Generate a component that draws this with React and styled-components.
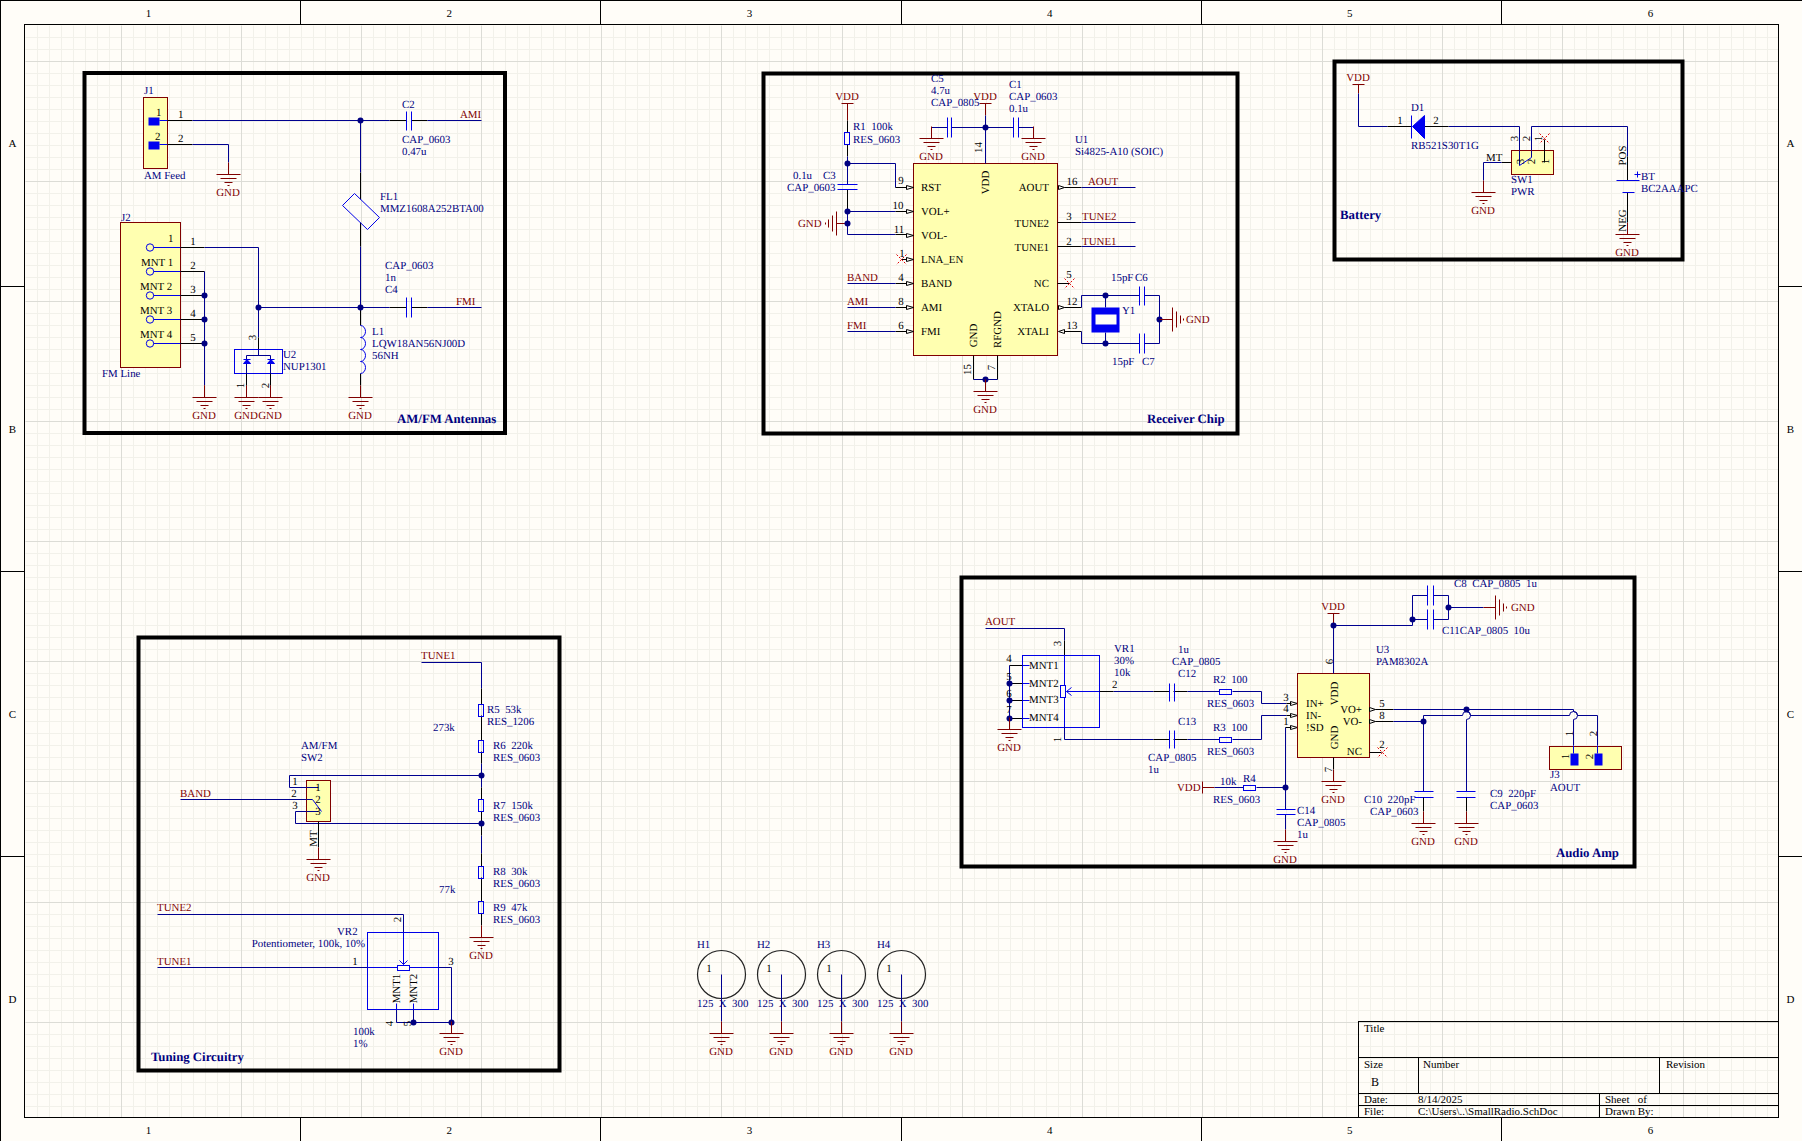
import React from "react";
import styled, { createGlobalStyle } from "styled-components";

const SHEET_BG = "#fffdf8";

const GlobalStyle = createGlobalStyle`
  * { box-sizing: border-box; }
  html, body { margin: 0; padding: 0; background: ${SHEET_BG}; }
`;

const Frame = styled.div`
  width: 1802px;
  height: 1141px;
  overflow: hidden;
  display: grid;
  grid-template-columns: 24px 1755px 23px;
  grid-template-rows: 24px 1094px 23px;
  background: ${SHEET_BG};
  font-family: "Liberation Serif", "Times New Roman", serif;
  color: #000;
`;

const HRuler = styled.div`
  grid-column: 1 / -1;
  grid-row: ${(p) => (p.$bottom ? 3 : 1)};
  display: grid;
  grid-template-columns: repeat(5, 300.2px) 1fr;
  border-top: ${(p) => (p.$bottom ? "none" : "1px solid #000")};
`;

const HZone = styled.div`
  display: flex;
  align-items: center;
  justify-content: center;
  padding-right: 3px;
  font-size: 11px;
  &:not(:first-child) { border-left: 1px solid #000; }
`;

const VRuler = styled.div`
  grid-column: ${(p) => (p.$right ? 3 : 1)};
  grid-row: 1 / -1;
  display: grid;
  grid-template-rows: 286px 285px 285px 1fr;
  border-left: ${(p) => (p.$right ? "none" : "1px solid #000")};
`;

const VZone = styled.div`
  display: flex;
  align-items: center;
  justify-content: center;
  font-size: 11px;
  &:not(:first-child) { border-top: 1px solid #000; }
`;

const Sheet = styled.div`
  grid-column: 2;
  grid-row: 2;
  position: relative;
  border: 1px solid #000;
  background: ${SHEET_BG};
`;

const Canvas = styled.svg`
  display: block;
  width: 1753px;
  height: 1092px;
`;

const TitleBlock = styled.div`
  position: absolute;
  right: 0;
  bottom: 0;
  width: 420px;
  display: flex;
  flex-direction: column;
  border-left: 1px solid #000;
  font-size: 11px;
  line-height: 12px;
`;

const TitleRow = styled.div`
  height: 36px;
  padding-left: 5px;
  border-top: 1px solid #000;
`;

const SizeRow = styled.div`
  height: 36px;
  display: grid;
  grid-template-columns: 59px 241px 1fr;
  border-top: 1px solid #000;
`;

const SizeCell = styled.div`
  padding-left: ${(p) => p.$inset}px;
  &:not(:first-child) { border-left: 1px solid #000; }
`;

const SizeLetter = styled.div`
  margin: 6px 0 0 7px;
  font-size: 12px;
`;

const StampRow = styled.div`
  height: 12px;
  display: grid;
  grid-template-columns: 59px 181px 1fr;
  border-top: 1px solid #000;
  line-height: 10px;
  overflow: hidden;
`;

const StampCell = styled.div`
  padding-left: ${(p) => (p.$value ? "0" : "5px")};
  white-space: pre;
  &:nth-child(3) { border-left: 1px solid #000; }
`;

// schematic primitives
const GridLine = styled.path`
  stroke: ${(p) => (p.$major ? "#dcdcd6" : "#f2f1ea")};
  fill: none;
`;
const Block = styled.rect`
  fill: none;
  stroke: #000;
  stroke-width: 4;
`;
const Wire = styled.path`
  fill: none;
  stroke: #000090;
`;
const Lead = styled.path`
  fill: none;
  stroke: #000;
`;
const Part = styled.path`
  fill: none;
  stroke: #0000e8;
`;
const Stub = styled.path`
  fill: none;
  stroke: #800000;
`;
const Body = styled.rect`
  fill: #ffffb0;
  stroke: #800000;
`;
const Outline = styled.rect`
  fill: none;
  stroke: #0000e8;
`;
const Pad = styled.rect`
  fill: #0000f0;
`;
const Dot = styled.circle`
  fill: #000080;
  r: 3px;
`;
const Hole = styled.circle`
  fill: none;
  stroke: #222;
  stroke-width: 1.2;
`;
const Arrow = styled.path`
  fill: none;
  stroke: #000;
`;
const Solid = styled.path`
  fill: #0000f0;
  stroke: #0000f0;
`;
const NoErcMark = styled.path`
  fill: none;
  stroke: #e00000;
  stroke-dasharray: 2 1.5;
`;

const SchText = styled.text.attrs((p) => ({
  dx: p.dx ?? -0.5,
  dy: p.dy ?? -1.2,
}))`
  font-family: "Liberation Serif", "Times New Roman", serif;
  font-size: 10.9px;
  white-space: pre;
  text-rendering: geometricPrecision;
`;
const Ref = styled(SchText)`
  fill: #000080;
`;
const Num = styled(SchText)`
  fill: #000;
`;
const Net = styled(SchText)`
  fill: #800000;
`;
const Caption = styled(SchText)`
  fill: #000080;
  font-weight: bold;
  font-size: 12.8px;
`;

// rotated text, x/y is the centre
const Up = ({ as: Tag = Num, x, y, children }) => (
  <Tag x={x} y={y} dx={0} dy="0.33em" textAnchor="middle" transform={`rotate(-90 ${x} ${y})`}>
    {children}
  </Tag>
);

const Gnd = ({ x, y }) => (
  <>
    <Stub d={`M${x} ${y - 12}V${y}M${x - 12} ${y}H${x + 12}M${x - 8} ${y + 4}H${x + 8}M${x - 4} ${y + 8}H${x + 4}M${x - 1} ${y + 11}H${x + 1}`} />
    <Net x={x} y={y + 23} textAnchor="middle">GND</Net>
  </>
);

// power port lying on its side, bars to the right (dir 1) or left (dir -1)
const GndSide = ({ x, y, dir = 1 }) => (
  <Stub
    d={`M${x} ${y - 12}V${y + 12}M${x + dir * 4} ${y - 8}V${y + 8}M${x + dir * 8} ${y - 4}V${y + 4}M${x + dir * 11} ${y - 1}V${y + 1}`}
  />
);

const Vdd = ({ x, y, len = 12 }) => (
  <>
    <Stub d={`M${x - 6} ${y}H${x + 6}M${x} ${y}V${y + len}`} />
    <Net x={x} y={y - 2} textAnchor="middle">VDD</Net>
  </>
);

const InPin = ({ x, y }) => <Arrow d={`M${x - 7} ${y - 2}V${y + 2}L${x} ${y}Z`} />;
const OutPin = ({ x, y }) => <Arrow d={`M${x} ${y - 2}V${y + 2}L${x + 6} ${y}Z`} />;
const NoErc = ({ x, y }) => <NoErcMark d={`M${x - 5} ${y - 5}L${x + 5} ${y + 5}M${x + 5} ${y - 5}L${x - 5} ${y + 5}`} />;

const gridX = Array.from({ length: 145 }, (_, i) => i + 3);
const gridY = Array.from({ length: 90 }, (_, i) => i + 3);
const snap = (k) => Math.round(0.5 + 12.015 * k);

const SheetGrid = () => (
  <>
    {[false, true].map((major) => (
      <GridLine
        key={String(major)}
        $major={major}
        d={
          gridX.filter((k) => (k % 10 === 0) === major).map((k) => `M${snap(k)} 25V1117`).join("") +
          gridY.filter((k) => (k % 10 === 5) === major).map((k) => `M25 ${snap(k)}H1778`).join("")
        }
      />
    ))}
  </>
);

const Antennas = () => (
  <>
    <Block x={84} y={72.500} width={420.500} height={360} />
    <Body x={143} y={97} width={24} height={71} />
    <Pad x={148} y={117} width={11} height={8} />
    <Pad x={148} y={141} width={11} height={8} />
    <Part d="M159 120H167M159 144H167" />
    <Lead d="M167 120H192M167 144H192M389 120H406M411 120H427M389 307H406M411 307H427" />
    <Wire d="M192 120H389M427 120H481M192 144H228V162M258 307H389M427 307H481" />
    <Part d="M406 111V130M411 111V130M406 297V317M411 297V317" />
    <Dot cx={360} cy={120} />
    <Gnd x={228} y={174} />
    <Ref x={144} y={95}>J1</Ref>
    <Num x={156} y={117}>1</Num>
    <Num x={155} y={141}>2</Num>
    <Num x={178} y={119}>1</Num>
    <Num x={178} y={143}>2</Num>
    <Ref x={402} y={109}>C2</Ref>
    <Net x={460} y={119}>AMI</Net>
    <Ref x={402} y={144}>CAP_0603</Ref>
    <Ref x={402} y={156}>0.47u</Ref>
    <Ref x={144} y={180}>AM Feed</Ref>

    <Wire d="M360 120V172M360 246V307" />
    <Lead d="M360 172V199M360 222V246M360 307V325M360 373V385" />
    <Part d="M354 193L379 217L367 229L342 205Z" />
    <Part d="M360 325a5 6 0 0 1 0 12a5 6 0 0 1 0 12a5 6 0 0 1 0 12a5 6 0 0 1 0 12" />
    <Gnd x={360} y={397} />
    <Dot cx={360} cy={307} />
    <Dot cx={258} cy={307} />
    <Ref x={380} y={201}>FL1</Ref>
    <Ref x={380} y={213}>MMZ1608A252BTA00</Ref>
    <Ref x={385} y={270}>CAP_0603</Ref>
    <Ref x={385} y={282}>1n</Ref>
    <Ref x={385} y={294}>C4</Ref>
    <Net x={456} y={306}>FMI</Net>
    <Ref x={372} y={336}>L1</Ref>
    <Ref x={372} y={348}>LQW18AN56NJ00D</Ref>
    <Ref x={372} y={360}>56NH</Ref>

    <Body x={120} y={222} width={60} height={145} />
    {[247, 271, 295, 319, 343].map((y) => (
      <React.Fragment key={y}>
        <Part d={`M153 ${y}H180`} />
        <Outline as="circle" cx={149.500} cy={y} r={3.700} />
        <Lead d={`M180 ${y}H204`} />
      </React.Fragment>
    ))}
    <Wire d="M204 247H258V337M204 271V385" />
    <Lead d="M258 337V349" />
    <Stub d="M204 385V397M246 385V397M270 385V397" />
    <Dot cx={204} cy={295} />
    <Dot cx={204} cy={319} />
    <Dot cx={204} cy={343} />
    <Gnd x={204} y={397} />
    <Ref x={121} y={222}>J2</Ref>
    <Num x={168} y={243}>1</Num>
    <Num x={141} y={267}>MNT 1</Num>
    <Num x={140} y={291}>MNT 2</Num>
    <Num x={140} y={315}>MNT 3</Num>
    <Num x={140} y={339}>MNT 4</Num>
    {[["1", 246], ["2", 270], ["3", 294], ["4", 318], ["5", 342]].map(([n, y]) => (
      <Num key={n} x={193} y={y} textAnchor="middle">{n}</Num>
    ))}
    <Ref x={102} y={378}>FM Line</Ref>

    <Outline x={234} y={349} width={48} height={24} />
    <Wire d="M258 349V355M246 355H270M246 355V373M270 355V373" />
    <Lead d="M246 373V385M270 373V385" />
    <Solid d="M243 363H250L246.500 359ZM267 363H274L270.500 359Z" />
    <Part d="M243 359H250M267 359H274" />
    <Gnd x={246} y={397} />
    <Gnd x={270} y={397} />
    <Up x={252} y={337}>3</Up>
    <Up x={240} y={385}>1</Up>
    <Up x={265} y={385}>2</Up>
    <Ref x={283} y={359}>U2</Ref>
    <Ref x={283} y={371}>NUP1301</Ref>
    <Caption x={397} y={424}>AM/FM Antennas</Caption>
  </>
);

const ReceiverChip = () => (
  <>
    <Block x={763} y={73} width={474} height={360} />
    <Body x={913} y={163} width={144} height={192} />

    <Vdd x={847} y={103} len={17} />
    <Lead d="M847 120V132M847 144V156M847 189V211" />
    <Wire d="M847 156V184M847 211V234H895M847 163H895V187M847 211H895" />
    <Lead d="M895 187H906M895 211H906M895 234H906M895 283H906M895 307H906M895 331H906" />
    <Outline x={844} y={132} width={5} height={12} />
    <Part d="M837 184H857M837 189H857" />
    <Stub d="M836 223H847" />
    <GndSide x={836} y={223} dir={-1} />
    <Dot cx={847} cy={163} />
    <Dot cx={847} cy={211} />
    <Dot cx={847} cy={223} />
    <Net x={798} y={228}>GND</Net>
    <Ref x={853} y={131}>R1  100k</Ref>
    <Ref x={853} y={144}>RES_0603</Ref>
    <Ref x={793} y={180}>0.1u</Ref>
    <Ref x={823} y={180}>C3</Ref>
    <Ref x={787} y={192}>CAP_0603</Ref>

    <Vdd x={985} y={103} />
    <Wire d="M985 115V163M931 127H947M951 127H1013M1018 127H1033V138M931 127V138" />
    <Part d="M947 117V137M951 117V137M1013 117V137M1018 117V137" />
    <Dot cx={985} cy={127} />
    <Gnd x={931} y={138} />
    <Gnd x={1033} y={138} />
    <Ref x={931} y={83}>C5</Ref>
    <Ref x={931} y={95}>4.7u</Ref>
    <Ref x={931} y={107}>CAP_0805</Ref>
    <Ref x={1009} y={89}>C1</Ref>
    <Ref x={1009} y={101}>CAP_0603</Ref>
    <Ref x={1009} y={113}>0.1u</Ref>
    <Ref x={1075} y={144}>U1</Ref>
    <Ref x={1075} y={156}>Si4825-A10 (SOIC)</Ref>
    <Up x={978} y={147}>14</Up>
    <Up x={985} y={182}>VDD</Up>

    {[187, 211, 235, 259, 283, 307, 331].map((y) => <InPin key={y} x={913} y={y} />)}
    <Lead d="M901 259H906" />
    <NoErc x={901} y={259} />
    <Wire d="M847 283H895M847 307H895M847 331H895" />
    {[["RST", 192], ["VOL+", 216], ["VOL-", 240], ["LNA_EN", 264], ["BAND", 288], ["AMI", 312], ["FMI", 336]].map(([t, y]) => (
      <Num key={t} x={921} y={y}>{t}</Num>
    ))}
    {[["AOUT", 192], ["TUNE2", 228], ["TUNE1", 252], ["NC", 288], ["XTALO", 312], ["XTALI", 336]].map(([t, y]) => (
      <Num key={t} x={1049} y={y} textAnchor="end">{t}</Num>
    ))}
    {[["9", 901, 185], ["10", 898, 210], ["11", 899, 234], ["1", 902, 258], ["4", 901, 282], ["8", 901, 306], ["6", 901, 330]].map(([n, x, y]) => (
      <Num key={n} x={x} y={y} textAnchor="middle">{n}</Num>
    ))}
    <Net x={847} y={282}>BAND</Net>
    <Net x={847} y={306}>AMI</Net>
    <Net x={847} y={330}>FMI</Net>

    <OutPin x={1058} y={187} />
    <OutPin x={1058} y={307} />
    <Arrow d="M1058 331L1064 329V333Z" />
    <Lead d="M1064 187H1081M1057 222H1081M1057 246H1081M1057 283H1069M1064 307H1081M1064 331H1081" />
    <Wire d="M1081 187H1135M1081 222H1135M1081 246H1135" />
    <NoErc x={1069} y={283} />
    <Wire d="M1081 307V295H1139M1144 295H1159V343H1144M1139 343H1081V331" />
    <Part d="M1139 286V305M1144 286V305M1139 333V353M1144 333V353" />
    <Dot cx={1105} cy={295} />
    <Dot cx={1105} cy={343} />
    <Dot cx={1159} cy={319} />
    <Wire d="M1105 295V307M1105 332V343" />
    <Pad x={1091} y={307} width={28} height={25} />
    <rect x={1095} y={314} width={21} height={10} fill={SHEET_BG} />
    <Stub d="M1159 319H1172" />
    <GndSide x={1172} y={319} />
    <Net x={1186} y={324}>GND</Net>
    <Ref x={1122} y={315}>Y1</Ref>
    <Ref x={1111} y={282}>15pF</Ref>
    <Ref x={1135} y={282}>C6</Ref>
    <Ref x={1112} y={366}>15pF</Ref>
    <Ref x={1142} y={366}>C7</Ref>
    <Num x={1072} y={186} textAnchor="middle">16</Num>
    <Net x={1088} y={186}>AOUT</Net>
    <Num x={1069} y={221} textAnchor="middle">3</Num>
    <Net x={1082} y={221}>TUNE2</Net>
    <Num x={1069} y={246} textAnchor="middle">2</Num>
    <Net x={1082} y={246}>TUNE1</Net>
    <Num x={1069} y={279} textAnchor="middle">5</Num>
    <Num x={1072} y={306} textAnchor="middle">12</Num>
    <Num x={1072} y={330} textAnchor="middle">13</Num>

    <Up x={973} y={335}>GND</Up>
    <Up x={997} y={329}>RFGND</Up>
    <Lead d="M973 355V379M997 355V379" />
    <Wire d="M973 379H997M985 379V391" />
    <Dot cx={985} cy={379} />
    <Gnd x={985} y={391} />
    <Up x={967} y={369}>15</Up>
    <Up x={991} y={367}>7</Up>
    <Caption x={1147} y={424}>Receiver Chip</Caption>
  </>
);

const Battery = () => (
  <>
    <Block x={1334} y={61} width={348} height={198} />
    <Vdd x={1358} y={84} len={9} />
    <Wire d="M1358 93V126H1387M1448 126H1519V150M1531 150V126H1627V156" />
    <Lead d="M1387 126H1411M1424 126H1448" />
    <Part d="M1411 115V138" />
    <Solid d="M1412 126L1424 115V138Z" />
    <Ref x={1411} y={112}>D1</Ref>
    <Num x={1400} y={125} textAnchor="middle">1</Num>
    <Num x={1436} y={125} textAnchor="middle">2</Num>
    <Ref x={1411} y={150}>RB521S30T1G</Ref>

    <Body x={1511} y={150} width={42} height={24} />
    <Wire d="M1519 150V165M1531 150V157" />
    <Part d="M1519 165L1531 157" />
    <Lead d="M1544 139V162M1501 162H1511" />
    <NoErc x={1544} y={138} />
    <Up x={1520} y={161}>3</Up>
    <Up x={1531} y={161}>2</Up>
    <Up x={1545} y={161}>1</Up>
    <Up x={1514} y={138}>3</Up>
    <Up x={1526} y={138}>2</Up>
    <Up x={1538} y={138}>1</Up>
    <Num x={1486} y={162}>MT</Num>
    <Wire d="M1501 162H1483V180" />
    <Gnd x={1483} y={192} />
    <Ref x={1511} y={184}>SW1</Ref>
    <Ref x={1511} y={196}>PWR</Ref>

    <Lead d="M1627 156V180M1627 192V222" />
    <Part d="M1616 180H1639M1622 192H1634M1634 174H1640M1637 171V177" />
    <Gnd x={1627} y={234} />
    <Up x={1622} y={155}>POS</Up>
    <Up x={1622} y={220}>NEG</Up>
    <Ref x={1641} y={181}>BT</Ref>
    <Ref x={1641} y={193}>BC2AAAPC</Ref>
    <Caption x={1340} y={220}>Battery</Caption>
  </>
);

const Tuning = () => (
  <>
    <Block x={138} y={637} width={421} height={433} />
    <Net x={421} y={660}>TUNE1</Net>
    <Wire d="M421 662H481V688M481 727V740M481 763V787M481 835V853M481 775H289V787H318" />
    <Lead d="M481 688V704M481 715V740M481 751V763M481 787V799M481 811V835M481 853V866M481 877V901M481 913V925" />
    <Wire d="M180 799H306M481 823H295V811H318" />
    {[704, 740, 799, 866, 901].map((y) => <Outline key={y} x={478} y={y} width={5} height={12} />)}
    <Dot cx={481} cy={775} />
    <Dot cx={481} cy={823} />
    <Gnd x={481} y={937} />
    {[
      ["R5  53k", 487, 714], ["RES_1206", 487, 726], ["R6  220k", 493, 750], ["RES_0603", 493, 762],
      ["R7  150k", 493, 810], ["RES_0603", 493, 822], ["R8  30k", 493, 876], ["RES_0603", 493, 888],
      ["R9  47k", 493, 912], ["RES_0603", 493, 924], ["273k", 433, 732], ["77k", 439, 894],
      ["AM/FM", 301, 750], ["SW2", 301, 762],
    ].map(([t, x, y]) => <Ref key={`${t}${y}`} x={x} y={y}>{t}</Ref>)}
    <Net x={180} y={798}>BAND</Net>

    <Body x={306} y={780} width={24} height={41} />
    <Wire d="M306 787H318M306 799H312M306 811H318" />
    <Part d="M312 799L321 811" />
    <Lead d="M318 821V847" />
    <Gnd x={318} y={859} />
    <Up x={313} y={838}>MT</Up>
    {[["1", 295, 786], ["2", 294, 798], ["3", 295, 810], ["1 ", 318, 792], ["2 ", 318, 804], ["3 ", 318, 816]].map(([n, x, y]) => (
      <Num key={n} x={x} y={y} textAnchor="middle">{n.trim()}</Num>
    ))}

    <Net x={157} y={912}>TUNE2</Net>
    <Wire d="M157 914H403V932" />
    <Part d="M403 932V964M399 960L403 964L407 960" />
    <Up x={397} y={919}>2</Up>
    <Outline x={367} y={932} width={71} height={77} />
    <Ref x={337} y={936}>VR2</Ref>
    <Ref x={365} y={948} textAnchor="end">Potentiometer, 100k, 10%</Ref>
    <Net x={157} y={966}>TUNE1</Net>
    <Wire d="M157 967H367" />
    <Part d="M367 967H397M409 967H438" />
    <Wire d="M438 967H451V1022H396V1009M413 1022V1009M451 1022V1033" />
    <Outline x={397} y={965} width={12} height={5} />
    <Part d="M396 1003V1009M413 1003V1009" />
    <Num x={355} y={966} textAnchor="middle">1</Num>
    <Num x={451} y={966} textAnchor="middle">3</Num>
    <Up x={396} y={988}>MNT1</Up>
    <Up x={413} y={988}>MNT2</Up>
    <Up x={389} y={1023}>4</Up>
    <Up x={407} y={1023}>5</Up>
    <Dot cx={413} cy={1022} />
    <Dot cx={451} cy={1022} />
    <Gnd x={451} y={1033} />
    <Ref x={353} y={1036}>100k</Ref>
    <Ref x={353} y={1048}>1%</Ref>
    <Caption x={151} y={1062}>Tuning Circuitry</Caption>
  </>
);

const AudioAmp = () => (
  <>
    <Block x={961} y={577} width={673} height={289} />
    <Net x={985} y={626}>AOUT</Net>
    <Wire d="M985 628H1064V640" />
    <Lead d="M1064 640V655" />
    <Outline x={1022} y={655} width={77} height={72} />
    <Part d="M1064 655V685M1064 697V727" />
    <Outline x={1060} y={685} width={5} height={12} />
    <Part d="M1066 691H1099M1071 687L1066 691L1071 695" />
    <Wire d="M1064 727V739M1113 691H1153M1064 739H1153" />
    <Lead d="M1099 691H1113M1153 691H1169M1173 691H1187M1153 739H1169M1173 739H1187" />
    <Wire d="M1187 691H1219M1232 691H1261V703H1286M1187 739H1219M1232 739H1261V715H1286M1285 727V787" />
    <Part d="M1169 683V701M1174 683V701M1169 730V748M1174 730V748" />
    <Outline x={1219} y={689} width={12} height={5} />
    <Outline x={1219} y={737} width={12} height={5} />
    <Lead d="M1286 703H1291M1286 715H1291M1285 727H1291" />
    <InPin x={1297} y={703} />
    <InPin x={1297} y={715} />
    <InPin x={1297} y={727} />
    <Ref x={1114} y={653}>VR1</Ref>
    <Ref x={1114} y={665}>30%</Ref>
    <Ref x={1114} y={677}>10k</Ref>
    <Num x={1112} y={689}>2</Num>
    <Up x={1057} y={643}>3</Up>
    <Up x={1057} y={739}>1</Up>

    <Lead d="M1009 665H1022M1009 683H1022M1009 700H1022M1009 718H1022" />
    <Part d="M1022 665H1029M1022 683H1029M1022 700H1029M1022 718H1029" />
    <Wire d="M1009 665V717" />
    <Stub d="M1009 717V729" />
    <Dot cx={1009} cy={683} />
    <Dot cx={1009} cy={700} />
    <Dot cx={1009} cy={718} />
    <Gnd x={1009} y={729} />
    {[["4", 663], ["5", 681], ["6", 698], ["7", 714]].map(([n, y]) => (
      <Num key={n} x={1009} y={y} textAnchor="middle">{n}</Num>
    ))}
    {[["MNT1", 670], ["MNT2", 688], ["MNT3", 704], ["MNT4", 722]].map(([t, y]) => (
      <Num key={t} x={1029} y={y}>{t}</Num>
    ))}
    {[
      ["1u", 1178, 654], ["CAP_0805", 1172, 666], ["C12", 1178, 678], ["R2  100", 1213, 684], ["RES_0603", 1207, 708],
      ["C13", 1178, 726], ["CAP_0805", 1148, 762], ["1u", 1148, 774], ["R3  100", 1213, 732], ["RES_0603", 1207, 756],
      ["10k", 1220, 786], ["R4", 1243, 783], ["RES_0603", 1213, 804], ["C14", 1297, 815], ["CAP_0805", 1297, 827], ["1u", 1297, 839],
    ].map(([t, x, y]) => <Ref key={`${t}${y}`} x={x} y={y}>{t}</Ref>)}

    <Net x={1177} y={792}>VDD</Net>
    <Stub d="M1202 781V793M1202 787H1214" />
    <Wire d="M1214 787H1243M1256 787H1285V809M1285 814V829" />
    <Outline x={1243} y={785} width={12} height={5} />
    <Dot cx={1285} cy={787} />
    <Part d="M1276 809H1295M1276 814H1295" />
    <Gnd x={1285} y={841} />

    <Body x={1297} y={673} width={72} height={84} />
    <Num x={1306} y={708}>IN+</Num>
    <Num x={1306} y={720}>IN-</Num>
    <Num x={1306} y={732}>!SD</Num>
    <Num x={1362} y={714} textAnchor="end">VO+</Num>
    <Num x={1362} y={726} textAnchor="end">VO-</Num>
    <Num x={1362} y={756} textAnchor="end">NC</Num>
    <Up x={1334} y={693}>VDD</Up>
    <Up x={1334} y={737}>GND</Up>
    <Num x={1286} y={702} textAnchor="middle">3</Num>
    <Num x={1286} y={713} textAnchor="middle">4</Num>
    <Num x={1286} y={726} textAnchor="middle">1</Num>
    <Up x={1329} y={661}>6</Up>
    <Up x={1328} y={769}>7</Up>
    <Vdd x={1333} y={613} />
    <Wire d="M1333 625V673M1333 625H1412V595H1427M1433 595H1448V619H1433M1427 619H1412M1448 607H1483" />
    <Part d="M1427 585V605M1433 585V605M1427 609V629M1433 609V629" />
    <Dot cx={1333} cy={625} />
    <Dot cx={1412} cy={619} />
    <Dot cx={1448} cy={607} />
    <Stub d="M1483 607H1495" />
    <GndSide x={1495} y={607} />
    <Net x={1511} y={612}>GND</Net>
    <Ref x={1454} y={588}>C8  CAP_0805  1u</Ref>
    <Ref x={1442} y={635}>C11CAP_0805  10u</Ref>
    <Ref x={1376} y={654}>U3</Ref>
    <Ref x={1376} y={666}>PAM8302A</Ref>
    <Lead d="M1333 757V769" />
    <Gnd x={1333} y={781} />

    <OutPin x={1369} y={709} />
    <OutPin x={1369} y={721} />
    <Lead d="M1375 709H1393M1375 721H1393M1369 752H1381" />
    <NoErc x={1382} y={752} />
    <Num x={1382} y={708} textAnchor="middle">5</Num>
    <Num x={1382} y={720} textAnchor="middle">8</Num>
    <Num x={1382} y={749} textAnchor="middle">2</Num>
    <Wire d="M1393 709H1573V711a4 4 0 0 1 0 8V745" />
    <Wire d="M1393 721H1423V715H1462a4 4 0 0 1 8 0H1569a4 4 0 0 1 8 0H1597V745" />
    <Wire d="M1466 709V711a4 4 0 0 1 0 8V791M1423 721V791" />
    <Dot cx={1466} cy={709} />
    <Dot cx={1423} cy={721} />
    <Part d="M1414 791H1433M1414 797H1433M1456 791H1475M1456 797H1475" />
    <Lead d="M1423 797V811M1466 797V811" />
    <Gnd x={1423} y={823} />
    <Gnd x={1466} y={823} />
    <Ref x={1364} y={804}>C10  220pF</Ref>
    <Ref x={1370} y={816}>CAP_0603</Ref>
    <Ref x={1490} y={798}>C9  220pF</Ref>
    <Ref x={1490} y={810}>CAP_0603</Ref>

    <Body x={1549} y={746} width={72} height={23} />
    <Pad x={1570} y={753} width={8} height={12} />
    <Pad x={1594} y={753} width={8} height={12} />
    <Part d="M1573 745V753M1597 745V753" />
    <Up x={1565} y={756}>1</Up>
    <Up x={1589} y={756}>2</Up>
    <Up x={1569} y={733}>1</Up>
    <Up x={1593} y={733}>2</Up>
    <Ref x={1550} y={779}>J3</Ref>
    <Ref x={1550} y={792}>AOUT</Ref>
    <Caption x={1556} y={858}>Audio Amp</Caption>
  </>
);

const HOLES = [
  { ref: "H1", x: 721 },
  { ref: "H2", x: 781 },
  { ref: "H3", x: 841 },
  { ref: "H4", x: 901 },
];

const MountingHoles = () => (
  <>
    {HOLES.map(({ ref, x }) => (
      <React.Fragment key={ref}>
        <Hole cx={x} cy={974} r={24} />
        <Wire d={`M${x} 974V1021`} />
        <Gnd x={x} y={1033} />
        <Ref x={x - 24} y={949}>{ref}</Ref>
        <Num x={x - 12} y={973} textAnchor="middle">1</Num>
        <Ref x={x - 24} y={1008}>125  X  300</Ref>
      </React.Fragment>
    ))}
  </>
);

export default function App() {
  return (
    <>
      <GlobalStyle />
      <Frame>
        <HRuler>
          {[1, 2, 3, 4, 5, 6].map((n) => <HZone key={n}>{n}</HZone>)}
        </HRuler>
        <VRuler>
          {["A", "B", "C", "D"].map((z) => <VZone key={z}>{z}</VZone>)}
        </VRuler>
        <Sheet>
          <Canvas viewBox="25 25 1753 1092">
            <g transform="translate(0.5 0.5)">
              <SheetGrid />
              <Antennas />
              <ReceiverChip />
              <Battery />
              <Tuning />
              <AudioAmp />
              <MountingHoles />
            </g>
          </Canvas>
          <TitleBlock>
            <TitleRow>Title</TitleRow>
            <SizeRow>
              <SizeCell $inset={5}>
                Size
                <SizeLetter>B</SizeLetter>
              </SizeCell>
              <SizeCell $inset={4}>Number</SizeCell>
              <SizeCell $inset={6}>Revision</SizeCell>
            </SizeRow>
            <StampRow>
              <StampCell>Date:</StampCell>
              <StampCell $value>8/14/2025</StampCell>
              <StampCell>{"Sheet   of"}</StampCell>
            </StampRow>
            <StampRow>
              <StampCell>File:</StampCell>
              <StampCell $value>{"C:\\Users\\..\\SmallRadio.SchDoc"}</StampCell>
              <StampCell>Drawn By:</StampCell>
            </StampRow>
          </TitleBlock>
        </Sheet>
        <VRuler $right>
          {["A", "B", "C", "D"].map((z) => <VZone key={z}>{z}</VZone>)}
        </VRuler>
        <HRuler $bottom>
          {[1, 2, 3, 4, 5, 6].map((n) => <HZone key={n}>{n}</HZone>)}
        </HRuler>
      </Frame>
    </>
  );
}
